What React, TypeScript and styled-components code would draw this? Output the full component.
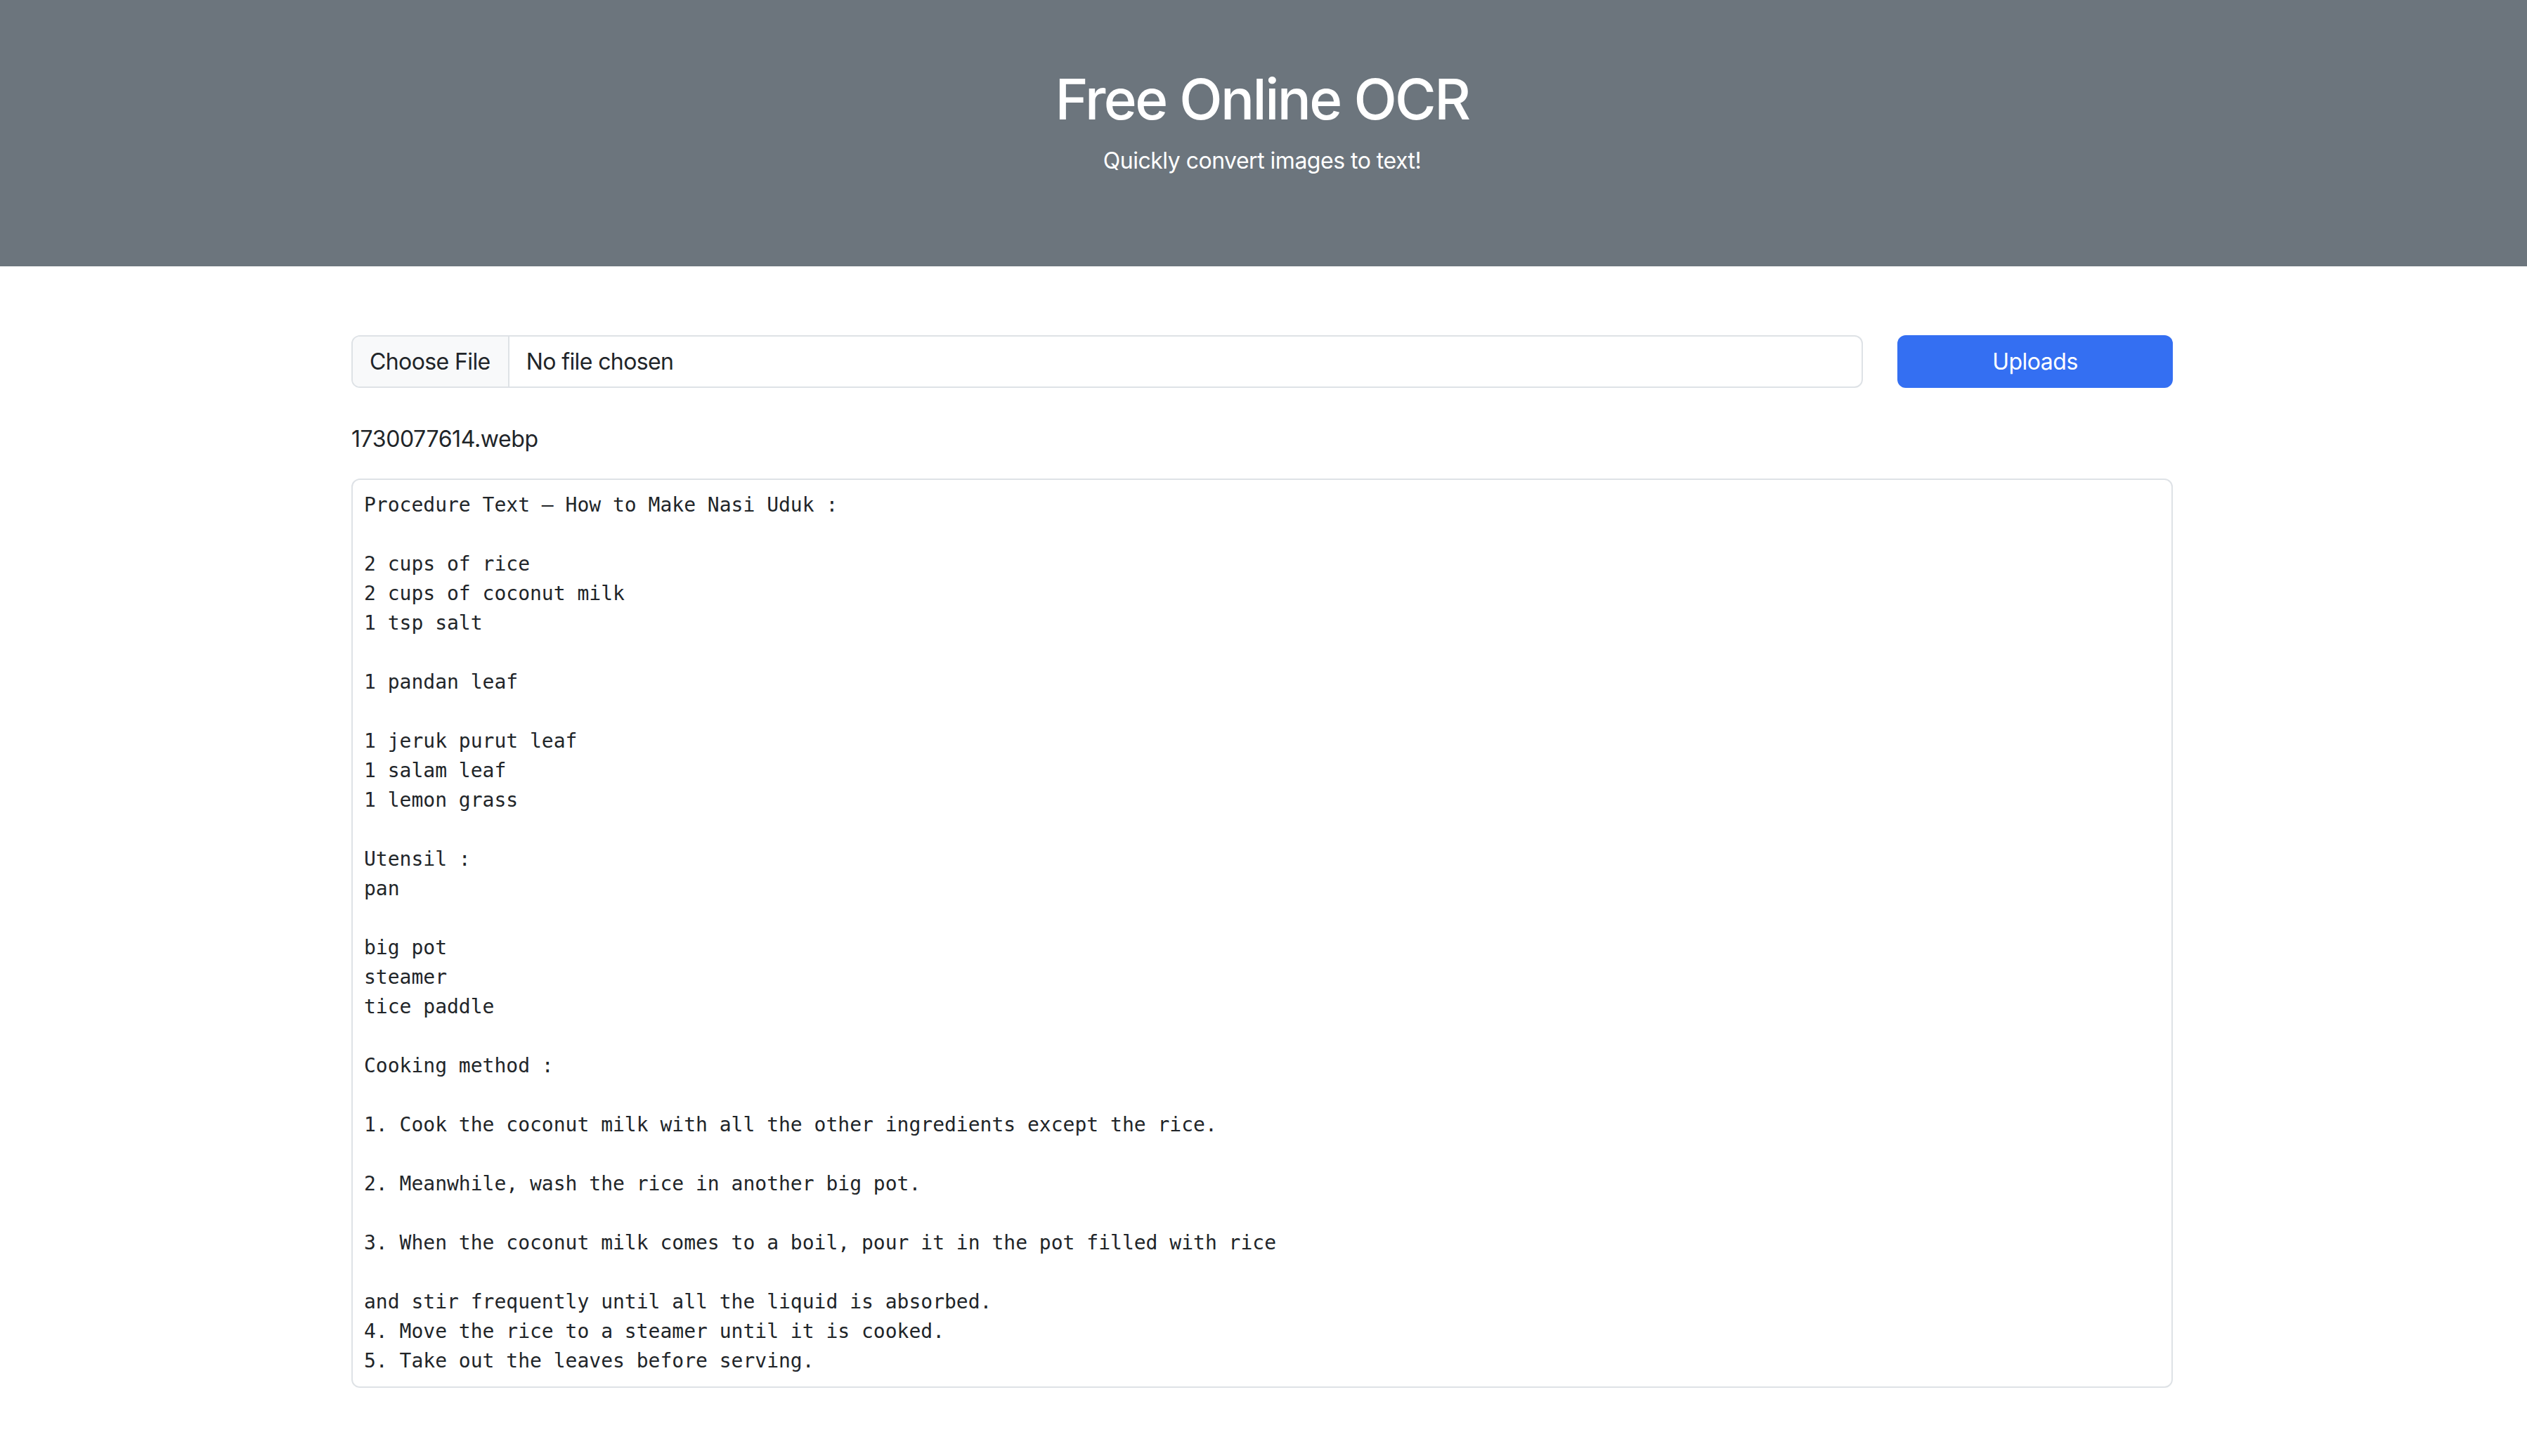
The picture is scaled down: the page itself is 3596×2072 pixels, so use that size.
import React from "react";
import styled, { createGlobalStyle } from "styled-components";

const GlobalStyle = createGlobalStyle`
  html, body {
    margin: 0;
    padding: 0;
    background: #ffffff;
  }
  body {
    font-family: Inter, "Noto Sans", "Liberation Sans", sans-serif;
    color: #212529;
  }
  * { box-sizing: border-box; }
`;

const Hero = styled.header`
  background: #6c757d;
  color: #ffffff;
  text-align: center;
  padding: 93px 4px 126px 0;
`;

const Title = styled.h1`
  margin: 0;
  font-size: 80px;
  line-height: 96px;
  font-weight: 500;
  letter-spacing: -2.6px;
`;

const Subtitle = styled.p`
  margin: 16px 0 0;
  font-size: 32px;
  line-height: 48px;
  font-weight: 400;
  letter-spacing: -0.5px;
`;

const Main = styled.main`
  width: 2592px;
  margin: 0 calc(50% - 1294px) 0 calc(50% - 1298px);
  padding-top: 98px;
  padding-bottom: 96px;
`;

const UploadRow = styled.form`
  display: grid;
  grid-template-columns: 1fr 392px;
  column-gap: 49px;
  align-items: stretch;
`;

const FileField = styled.label`
  display: flex;
  align-items: stretch;
  height: 75px;
  border: 2px solid #dee2e6;
  border-radius: 12px;
  overflow: hidden;
  background: #ffffff;
  font-size: 32px;
  letter-spacing: -0.6px;
  cursor: pointer;
`;

const FileButton = styled.span`
  display: flex;
  align-items: center;
  padding: 0 25px 0 24px;
  background: #f8f9fa;
  border-right: 2px solid #dee2e6;
  color: #212529;
  white-space: nowrap;
`;

const FileStatus = styled.span`
  display: flex;
  align-items: center;
  padding: 0 24px;
  color: #212529;
`;

const HiddenInput = styled.input`
  display: none;
`;

const UploadButton = styled.button`
  height: 75px;
  border: none;
  border-radius: 12px;
  background: #346ff2;
  color: #ffffff;
  font-family: inherit;
  font-size: 32px;
  font-weight: 400;
  letter-spacing: -0.5px;
  cursor: pointer;
`;

const FileName = styled.p`
  margin: 49px 0 32px;
  font-size: 32px;
  line-height: 48px;
  letter-spacing: -0.4px;
  color: #212529;
`;

const ResultBox = styled.div`
  border: 2px solid #dee2e6;
  border-radius: 12px;
  padding: 15px 16px;
  font-family: "DejaVu Sans Mono", "Liberation Mono", monospace;
  font-size: 28px;
  line-height: 42px;
  color: #212529;
  white-space: pre-wrap;
  background: #ffffff;
`;

const ocrText = `Procedure Text – How to Make Nasi Uduk :

2 cups of rice
2 cups of coconut milk
1 tsp salt

1 pandan leaf

1 jeruk purut leaf
1 salam leaf
1 lemon grass

Utensil :
pan

big pot
steamer
tice paddle

Cooking method :

1. Cook the coconut milk with all the other ingredients except the rice.

2. Meanwhile, wash the rice in another big pot.

3. When the coconut milk comes to a boil, pour it in the pot filled with rice

and stir frequently until all the liquid is absorbed.
4. Move the rice to a steamer until it is cooked.
5. Take out the leaves before serving.`;

export default function App() {
  return (
    <>
      <GlobalStyle />
      <Hero>
        <Title>Free Online OCR</Title>
        <Subtitle>Quickly convert images to text!</Subtitle>
      </Hero>
      <Main>
        <UploadRow onSubmit={(e) => e.preventDefault()}>
          <FileField>
            <FileButton>Choose File</FileButton>
            <FileStatus>No file chosen</FileStatus>
            <HiddenInput type="file" />
          </FileField>
          <UploadButton type="submit">Uploads</UploadButton>
        </UploadRow>
        <FileName>1730077614.webp</FileName>
        <ResultBox>{ocrText}</ResultBox>
      </Main>
    </>
  );
}
